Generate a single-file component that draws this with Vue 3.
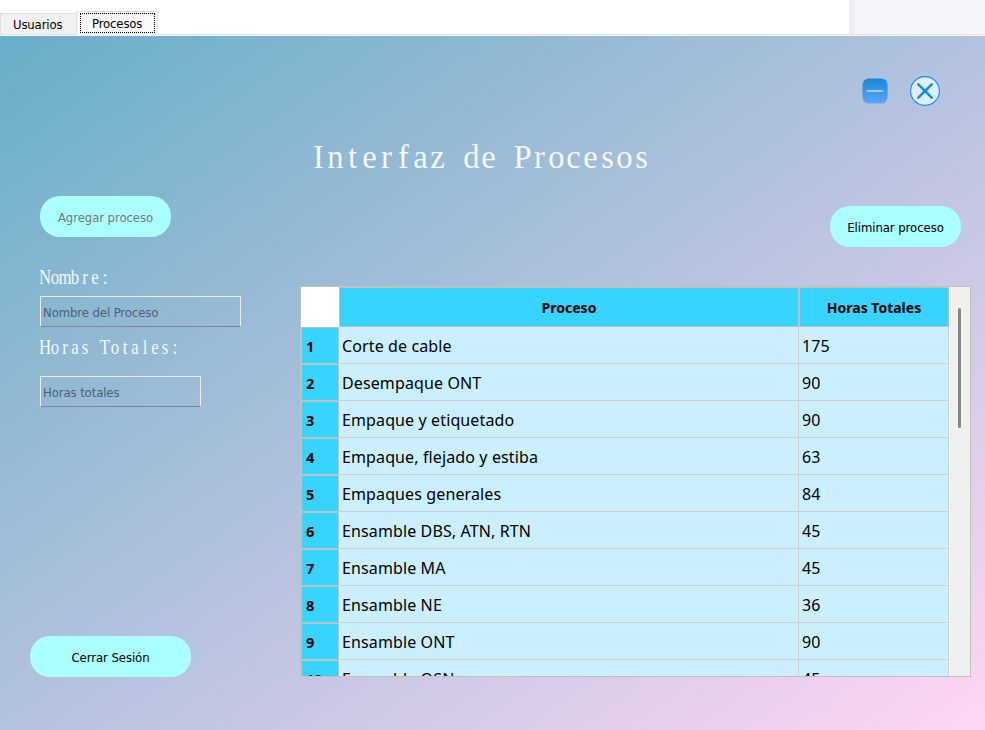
<script setup>
const rows = [
  ['Corte de cable', '175'],
  ['Desempaque ONT', '90'],
  ['Empaque y etiquetado', '90'],
  ['Empaque, flejado y estiba', '63'],
  ['Empaques generales', '84'],
  ['Ensamble DBS, ATN, RTN', '45'],
  ['Ensamble MA', '45'],
  ['Ensamble NE', '36'],
  ['Ensamble ONT', '90'],
  ['Ensamble OSN', '45'],
]

// One x coordinate per character gives the serif face a fixed pitch.
const cells = (text, pitch, squeeze) =>
  [...text].map((_, i) => ((i + 0.5) * pitch / squeeze).toFixed(2)).join(' ')
</script>

<template>
  <div class="window">
    <div class="tabbar">
      <div class="tabs">
        <div class="tab">Usuarios</div>
        <div class="tab active"><span class="focus">Procesos</span></div>
      </div>
      <div class="backdrop"></div>
    </div>

    <main class="page">
      <div class="controls">
        <svg class="minimize" viewBox="0 0 26 26">
          <defs>
            <linearGradient id="minFill" x1="0" y1="0" x2="0" y2="1">
              <stop offset="0" stop-color="#1688d6" />
              <stop offset="1" stop-color="#5fa6fb" />
            </linearGradient>
          </defs>
          <rect x="0.4" y="0.4" width="25.2" height="25.2" rx="6.5" fill="url(#minFill)" />
          <path d="M5.5 13H20.5" stroke="#a5c6e6" stroke-width="2" stroke-linecap="round" />
        </svg>
        <svg class="close" viewBox="0 0 30 30">
          <circle cx="15" cy="15" r="14.4" fill="#e1effb" stroke="#0a8cff" stroke-width="1.1" />
          <path d="M8.3 8.3L21.7 21.7M21.7 8.3L8.3 21.7" stroke="#0a8cff" stroke-width="2.5" stroke-linecap="round" />
        </svg>
      </div>

      <svg class="title" width="340" height="40">
        <text transform="scale(0.96 1)" y="31" :x="cells('Interfaz de Procesos', 17, 0.96)">Interfaz de Procesos</text>
      </svg>

      <div class="body">
        <aside class="side">
          <button class="pill muted" disabled>Agregar proceso</button>
          <svg class="label" width="200" height="26">
            <text transform="scale(0.84 1)" y="18" :x="cells('Nombre:', 10, 0.84)">Nombre:</text>
          </svg>
          <div class="field wide">Nombre del Proceso</div>
          <svg class="label second" width="200" height="26">
            <text transform="scale(0.84 1)" y="18" :x="cells('Horas Totales:', 10, 0.84)">Horas Totales:</text>
          </svg>
          <div class="field">Horas totales</div>
          <button class="pill logout">Cerrar Sesión</button>
        </aside>

        <section class="content">
          <button class="pill remove">Eliminar proceso</button>
          <div class="table">
            <div class="grid">
              <div class="row head">
                <div class="corner"></div>
                <div class="th name">Proceso</div>
                <div class="th hours">Horas Totales</div>
              </div>
              <div v-for="(r, i) in rows" :key="i" class="row">
                <div class="num">{{ i + 1 }}</div>
                <div class="td name"><span>{{ r[0] }}</span></div>
                <div class="td hours"><span>{{ r[1] }}</span></div>
              </div>
            </div>
            <div class="scroll"><div class="thumb"></div></div>
          </div>
        </section>
      </div>
    </main>
  </div>
</template>

<style>
body { overflow: hidden; }
</style>

<style scoped>
* { box-sizing: border-box; }
.window {
  width: 985px;
  height: 730px;
  overflow: hidden;
  font: 13px "DejaVu Sans Condensed", "DejaVu Sans", sans-serif;
  font-stretch: condensed;
  color: #000;
}
.tabbar {
  display: flex;
  height: 36px;
  background: #fff;
  border-bottom: 1px solid #f8f8f8;
  box-shadow: inset 0 -1px #e2e2e2;
}
.tabs { display: flex; align-items: flex-end; width: 849px; }
.backdrop {
  flex: 1;
  height: 34px;
  background: linear-gradient(90deg, #e9ebed, #f5f6fa 9px);
}
.tab {
  width: 76px;
  height: 22px;
  padding-left: 12px;
  border: 1px solid #e0e0e0;
  border-right: 0;
  background: #f2f2f2;
  font-size: 13px;
  line-height: 22px;
  letter-spacing: -0.15px;
}
.tab.active {
  width: 82px;
  height: 24px;
  padding: 1px 0 0 3px;
  border-right: 1px solid #e0e0e0;
  border-bottom: 0;
  background: #f9f9f9;
}
.focus {
  display: block;
  width: 75px;
  height: 20px;
  padding-left: 11px;
  border: 1px dotted #000;
  line-height: 20px;
}
.page {
  display: flex;
  flex-direction: column;
  height: 694px;
  padding-top: 40px;
  background: linear-gradient(to bottom right, #67aec8, #ffd6f3);
}
.controls {
  display: flex;
  align-items: center;
  justify-content: flex-end;
  gap: 22px;
  height: 30px;
  padding-right: 45px;
}
.minimize { width: 26px; height: 26px; }
.close { width: 30px; height: 30px; }
.title, .label {
  display: block;
  overflow: visible;
  font-family: "Liberation Serif", serif;
  fill: #fff;
  fill-opacity: 0.92;
  text-anchor: middle;
}
.title { margin: 31px 0 0 310px; font-size: 34px; }
.body { display: flex; flex: 1; }
.side { display: flex; flex-direction: column; width: 300px; padding: 19px 0 0 40px; }
.pill {
  width: 131px;
  height: 41px;
  padding: 2px 0 0;
  border: 0;
  border-radius: 20px;
  background: #aaffff;
  color: #000;
  font: inherit;
  font-size: 13px;
  letter-spacing: -0.07px;
}
.muted { color: #787878; }
.label { margin-top: 29px; font-size: 20px; }
.label.second { margin-top: 9px; }
.field {
  width: 161px;
  height: 31px;
  padding-left: 2px;
  border: 1px solid #ececec;
  border-bottom-color: #868686;
  border-radius: 1px;
  color: #4c6273;
  font-size: 13px;
  line-height: 31px;
  letter-spacing: -0.1px;
}
.wide { width: 201px; margin-top: 4px; }
.second + .field { margin-top: 14px; }
.logout { width: 161px; margin: 229px 0 0 -10px; }
.content { display: flex; flex-direction: column; width: 671px; }
.remove { align-self: flex-end; margin: 29px 10px 39px 0; }
.table {
  display: flex;
  width: 671px;
  height: 391px;
  overflow: hidden;
  border: 1px solid #c0c0c0;
  background: #fff;
}
.grid { width: 648px; font-family: "Noto Sans", sans-serif; font-size: 16px; letter-spacing: 0.12px; }
.row { display: grid; grid-template: 37px / 38px 460px 150px; height: 37px; }
.head { grid-template-rows: 40px; height: 40px; }
.corner { background: #fff; }
.th, .num {
  border: 1px solid #c0c0c0;
  background: #36d4ff;
  font-weight: 700;
  font-size: 14px;
  letter-spacing: 0;
}
.th { display: flex; align-items: center; justify-content: center; }
.num { padding-left: 4px; font-size: 14.5px; line-height: 36px; }
.td {
  display: flex;
  align-items: center;
  padding: 2px 0 0 3px;
  border-right: 1px solid #d0d0d0;
  border-bottom: 1px solid #d0d0d0;
  background: #caefff;
  white-space: nowrap;
}
.scroll { width: 21px; padding: 21px 0 0 8px; border-left: 1px solid #fff; background: #f0f0f0; }
.thumb { width: 3px; height: 120px; border-radius: 2px; background: #868686; }
</style>
